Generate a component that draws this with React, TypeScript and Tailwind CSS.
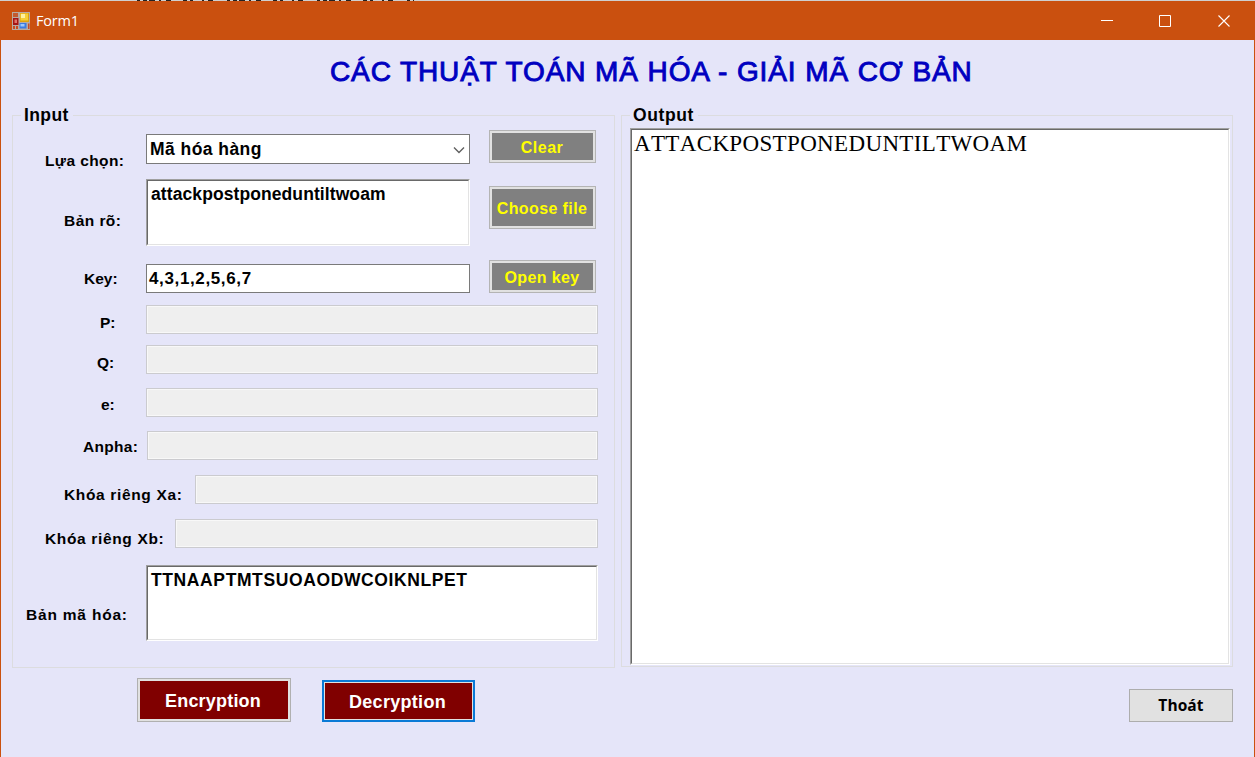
import type { ReactNode } from 'react';

function FormIcon() {
  return (
    <svg width="18" height="18" viewBox="0 0 18 18">
      <rect width="18" height="18" fill="#b8aaa2" />
      <rect x="1" y="1" width="5" height="4" fill="#c25a30" />
      <rect x="1" y="6" width="5.5" height="7" fill="#a51515" />
      <rect x="2.5" y="7.5" width="2.5" height="3.5" fill="#e2736a" />
      <rect x="1" y="14" width="2" height="3" fill="#c94a20" />
      <rect x="4" y="14" width="2" height="3" fill="#c94a20" />
      <rect x="8" y="1" width="9" height="9" fill="#dea30c" />
      <rect x="8.5" y="1.5" width="7.5" height="7" fill="#f6cf35" />
      <rect x="9" y="2" width="4" height="4" fill="#fdf0a0" />
      <rect x="7.5" y="11" width="7" height="5.5" fill="#3a7be0" />
      <rect x="8.5" y="12" width="4" height="2.5" fill="#9cc6fa" />
      <rect x="16" y="11.5" width="1.5" height="5.5" fill="#c94a20" />
    </svg>
  );
}

function TitleBar() {
  return (
    <header className="flex h-[39px] shrink-0 items-center bg-[#ca500f] pl-3">
      <FormIcon />
      <span className="ml-[6px] grow font-['Open_Sans',sans-serif] text-[14.5px] leading-5 font-normal tracking-[-0.2px] text-white">Form1</span>
      <svg width="154" height="39" viewBox="0 0 154 39" fill="none" stroke="white">
        <path d="M0 19.5H12" />
        <path d="M58.5 14.5h11v11h-11z" />
        <path d="M117.5 14.5l11 11M128.5 14.5l-11 11" strokeWidth="1.1" />
      </svg>
    </header>
  );
}

function Row({ className, children }: { className: string; children: ReactNode }) {
  return <div className={`flex shrink-0 items-start ${className}`}>{children}</div>;
}

function Label({ className, children }: { className: string; children: ReactNode }) {
  return <label className={`shrink-0 whitespace-nowrap text-[15.5px] leading-5 ${className}`}>{children}</label>;
}

function DisabledField({ className }: { className: string }) {
  return <div className={`h-[29px] shrink-0 border border-[#cbcbcf] bg-[#efefef] outline-1 -outline-offset-2 outline-[#f8f8f8] ${className}`} />;
}

function Sunken({ className, children }: { className: string; children: ReactNode }) {
  return (
    <div className={`shrink-0 border border-t-[#a0a0a0] border-r-white border-b-white border-l-[#a0a0a0] ${className}`}>
      <div className="h-full border border-t-[#696969] border-r-[#e3e3e3] border-b-[#e3e3e3] border-l-[#696969] bg-white">{children}</div>
    </div>
  );
}

function GrayButton({ className, children }: { className: string; children: ReactNode }) {
  return (
    <button className={`ml-[19px] w-[107px] shrink-0 whitespace-nowrap border border-[#b4b4b4] bg-[#e1e1e1] p-[2px] text-[#ffff00] ${className}`}>
      <span className="flex h-full items-center justify-center bg-[#808080] pt-[2px] pr-px">{children}</span>
    </button>
  );
}

export default function App() {
  return (
    <div className="flex h-[757px] w-[1255px] flex-col overflow-hidden bg-[#e5e5f9] font-['Liberation_Sans',Arial,sans-serif] font-bold text-black">
      <div className="h-px shrink-0 bg-[#cfcfcf] pl-[137px]">
        <svg width="277" height="1" className="block" shapeRendering="crispEdges">
          <path d="M0 .5H277" stroke="#222" strokeDasharray="3 3 4 2 6 4 2 5 5 12 4 3 3 9 2 4 5 14" />
        </svg>
      </div>
      <TitleBar />
      <main className="flex grow flex-col border-x border-[#ca500f]">
        <h1 className="h-[65px] whitespace-nowrap pt-[14px] pl-[329px] text-[28px] leading-9 font-normal tracking-[0.9px] text-[#0000c0] [-webkit-text-stroke:0.9px_#0000c0]">
          CÁC THUẬT TOÁN MÃ HÓA - GIẢI MÃ CƠ BẢN
        </h1>

        <div className="flex pl-[11px]">
          <fieldset className="h-[563px] w-[603px] shrink-0 border border-[#dcdcdf]">
            <legend className="ml-2 h-[20px] pr-1 pl-[3px] text-[17.5px] leading-[21px] tracking-[0.4px]">Input</legend>
            <Row className="h-[50px]">
              <Label className="mt-[26px] w-[133px] pl-[32px] tracking-[0.4px]">Lựa chọn:</Label>
              <div className="mt-[9px] flex h-[30px] w-[324px] shrink-0 items-center justify-between border border-[#7a7a7a] bg-white pr-1 pl-[3px] text-[17.5px] tracking-[0.45px]">
                <span className="leading-6">Mã hóa hàng</span>
                <svg width="12" height="8" viewBox="0 0 12 8" fill="none" stroke="#606060" strokeWidth="1.4" className="mt-[2px]">
                  <path d="M1 1.5l5 5 5-5" />
                </svg>
              </div>
              <GrayButton className="mt-[5px] h-[33px] text-[16px] tracking-[0.5px]">Clear</GrayButton>
            </Row>
            <Row className="h-[80px]">
              <Label className="mt-[36px] w-[133px] pl-[51px] tracking-[0.45px]">Bản rõ:</Label>
              <Sunken className="mt-1 h-[67px] w-[324px]">
                <p className="pt-[2px] pl-[3px] text-[17.5px] leading-[22px] tracking-[0.09px]">attackpostponeduntiltwoam</p>
              </Sunken>
              <GrayButton className="mt-[11px] h-[43px] text-[16px] tracking-[0.4px]">Choose file</GrayButton>
            </Row>
            <Row className="h-[45px]">
              <Label className="mt-[14px] w-[133px] pl-[71px]">Key:</Label>
              <div className="mt-[9px] h-[29px] w-[324px] shrink-0 border border-[#7a7a7a] bg-white pt-1 pl-[2px] text-[17px] leading-5 tracking-[0.63px]">4,3,1,2,5,6,7</div>
              <GrayButton className="mt-[5px] h-[33px] text-[16px] tracking-[0.4px]">Open key</GrayButton>
            </Row>
            <Row className="h-[40px]">
              <Label className="mt-[13px] w-[133px] pl-[87px]">P:</Label>
              <DisabledField className="mt-[5px] w-[452px]" />
            </Row>
            <Row className="h-[42px]">
              <Label className="mt-[13px] w-[133px] pl-[84px]">Q:</Label>
              <DisabledField className="mt-[5px] w-[452px]" />
            </Row>
            <Row className="h-[44px]">
              <Label className="mt-[13px] w-[133px] pl-[88px]">e:</Label>
              <DisabledField className="mt-[6px] w-[452px]" />
            </Row>
            <Row className="h-[44px]">
              <Label className="mt-[11px] w-[134px] pl-[70px] tracking-[0.3px]">Anpha:</Label>
              <DisabledField className="mt-[5px] w-[451px]" />
            </Row>
            <Row className="h-[44px]">
              <Label className="mt-[15px] w-[182px] pl-[51px] tracking-[0.65px]">Khóa riêng Xa:</Label>
              <DisabledField className="mt-[5px] w-[403px]" />
            </Row>
            <Row className="h-[46px]">
              <Label className="mt-[15px] w-[162px] pl-[32px] tracking-[0.65px]">Khóa riêng Xb:</Label>
              <DisabledField className="mt-[5px] w-[423px]" />
            </Row>
            <Row className="h-[100px]">
              <Label className="mt-[45px] w-[133px] pl-[13px] tracking-[0.8px]">Bản mã hóa:</Label>
              <Sunken className="mt-[5px] h-[76px] w-[452px]">
                <p className="pt-[2px] pl-[3px] text-[17.5px] leading-[22px] tracking-[0.61px]">TTNAAPTMTSUOAODWCOIKNLPET</p>
              </Sunken>
            </Row>
          </fieldset>

          <fieldset className="ml-[6px] h-[562px] w-[612px] shrink-0 border border-[#dcdcdf]">
            <legend className="ml-2 h-[20px] pr-1 pl-[3px] text-[17.5px] leading-[21px] tracking-[0.6px]">Output</legend>
            <Sunken className="mt-[3px] ml-[8px] h-[537px] w-[600px]">
              <p className="pl-[2px] font-['Liberation_Serif',serif] text-[23px] leading-7 font-normal tracking-[0.35px] [font-kerning:none]">ATTACKPOSTPONEDUNTILTWOAM</p>
            </Sunken>
          </fieldset>
        </div>

        <footer className="flex items-start pt-[10px] pl-[136px] text-[18px]">
          <button className="h-[44px] w-[154px] border border-[#b0b0b0] bg-[#e1e1e1] p-[2px] tracking-[0.2px] text-white">
            <span className="flex h-full items-center justify-center bg-[#800000] pt-[2px] pr-[2px]">Encryption</span>
          </button>
          <button className="mt-[2px] ml-[31px] h-[42px] w-[153px] border-2 border-[#0a7ad6] bg-[#e1e1e1] p-px tracking-[0.3px] text-white">
            <span className="flex h-full items-center justify-center bg-[#800000] pt-[2px] pr-[2px]">Decryption</span>
          </button>
          <button className="mt-[11px] ml-[654px] h-[33px] w-[104px] border border-[#adadad] bg-[#e1e1e1] font-['Open_Sans',sans-serif] text-[15.5px] tracking-[0.1px]">Thoát</button>
        </footer>
      </main>
    </div>
  );
}
